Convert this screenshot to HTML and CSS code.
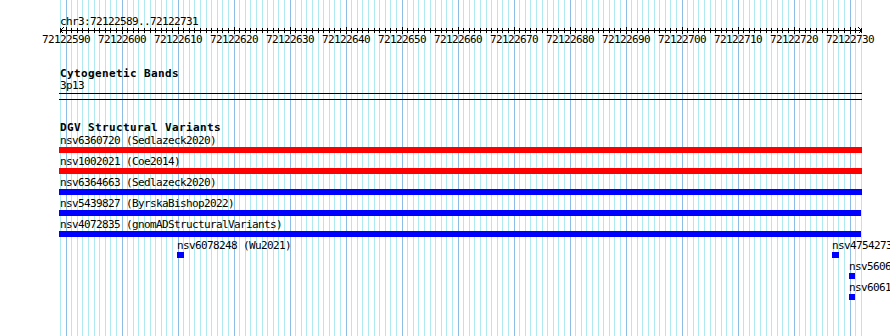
FILE: index.html
```html
<!DOCTYPE html>
<html>
<head>
<meta charset="utf-8">
<link rel="stylesheet" href="styles.css">
</head>
<body>
<div class="page">
  <div class="panel">
    <section class="ruler-track">
      <div class="chr-label">chr3:72122589..72122731</div>
      <div class="ruler">
        <svg class="arrow arrow-left" width="4" height="7" viewBox="0 0 4 7"><polyline points="3.5,0.5 0.5,3.5 3.5,6.5" fill="none" stroke="#000" stroke-width="1"/></svg>
        <svg class="arrow arrow-right" width="4" height="7" viewBox="0 0 4 7"><polyline points="0.5,0.5 3.5,3.5 0.5,6.5" fill="none" stroke="#000" stroke-width="1"/></svg>
      </div>
      <div class="ruler-labels">
        <span>72122590</span><span>72122600</span><span>72122610</span><span>72122620</span><span>72122630</span>
        <span>72122640</span><span>72122650</span><span>72122660</span><span>72122670</span><span>72122680</span>
        <span>72122690</span><span>72122700</span><span>72122710</span><span>72122720</span><span>72122730</span>
      </div>
    </section>

    <section class="track band-track">
      <div class="track-title band-title">Cytogenetic Bands</div>
      <div class="feat-label">3p13</div>
      <div class="band"></div>
    </section>

    <section class="track dgv-track">
      <div class="track-title">DGV Structural Variants</div>
      <div class="row">
        <div class="feature"><div class="feat-label">nsv6360720 (Sedlazeck2020)</div><div class="bar red" style="width:803px"></div></div>
      </div>
      <div class="row">
        <div class="feature"><div class="feat-label">nsv1002021 (Coe2014)</div><div class="bar red" style="width:803px"></div></div>
      </div>
      <div class="row">
        <div class="feature"><div class="feat-label">nsv6364663 (Sedlazeck2020)</div><div class="bar blue" style="width:803px"></div></div>
      </div>
      <div class="row">
        <div class="feature"><div class="feat-label">nsv5439827 (ByrskaBishop2022)</div><div class="bar blue" style="width:802px"></div></div>
      </div>
      <div class="row">
        <div class="feature"><div class="feat-label">nsv4072835 (gnomADStructuralVariants)</div><div class="bar blue" style="width:802px"></div></div>
      </div>
      <div class="row">
        <div class="feature small" style="margin-left:117px"><div class="feat-label">nsv6078248 (Wu2021)</div><div class="box blue" style="width:7px"></div></div>
        <div class="feature small" style="margin-left:541px"><div class="feat-label">nsv4754273</div><div class="box blue" style="width:7px"></div></div>
      </div>
      <div class="row">
        <div class="feature small" style="margin-left:789px"><div class="feat-label">nsv5606</div><div class="box blue" style="width:6px"></div></div>
      </div>
      <div class="row">
        <div class="feature small" style="margin-left:789px"><div class="feat-label">nsv6061</div><div class="box blue" style="width:6px"></div></div>
      </div>
    </section>
  </div>
</div>
</body>
</html>
```

FILE: styles.css
```css
* { box-sizing: border-box; }
html, body { margin: 0; padding: 0; background: #fff; }
body {
  width: 890px;
  height: 336px;
  overflow: hidden;
  font-family: "DejaVu Sans Mono", "Liberation Mono", monospace;
  font-size: 11px;
  letter-spacing: -0.62px;
  color: #000;
}
.page {
  width: 890px;
  height: 336px;
  padding-left: 60px;
  overflow: hidden;
}
.panel {
  width: 802px;
  height: 336px;
  background-image: linear-gradient(to right,
    #aeeaf0 0 1px, transparent 1px 6px,
    #8dbde4 6px 7px, transparent 7px 11px,
    #aeeaf0 11px 12px, transparent 12px 17px,
    #aeeaf0 17px 18px, transparent 18px 22px,
    #aeeaf0 22px 23px, transparent 23px 28px,
    #aeeaf0 28px 29px, transparent 29px 34px,
    #aeeaf0 34px 35px, transparent 35px 39px,
    #aeeaf0 39px 40px, transparent 40px 45px,
    #aeeaf0 45px 46px, transparent 46px 50px,
    #aeeaf0 50px 51px, transparent 51px 56px);
  background-size: 56px 100%;
  background-repeat: repeat-x;
  white-space: nowrap;
}

/* ruler */
.ruler-track { padding-top: 16px; }
.chr-label { height: 11px; line-height: 11px; }
.ruler {
  position: relative;
  height: 7px;
  background-image:
    linear-gradient(#000, #000),
    linear-gradient(to right,
      #000 0 1px, transparent 1px 6px,
      #000 6px 7px, transparent 7px 11px,
      #000 11px 12px, transparent 12px 17px,
      #000 17px 18px, transparent 18px 22px,
      #000 22px 23px, transparent 23px 28px,
      #000 28px 29px, transparent 29px 34px,
      #000 34px 35px, transparent 35px 39px,
      #000 39px 40px, transparent 40px 45px,
      #000 45px 46px, transparent 46px 50px,
      #000 50px 51px, transparent 51px 56px),
    linear-gradient(to right, transparent 0 6px, #000 6px 7px, transparent 7px 56px);
  background-size: 100% 1px, 56px 5px, 56px 7px;
  background-position: 0 3px, 0 1px, 0 0;
  background-repeat: no-repeat, repeat-x, repeat-x;
}
.arrow { position: absolute; top: 0; display: block; shape-rendering: crispEdges; }
.arrow-left { left: 0; }
.arrow-right { left: 798px; }
.ruler-labels {
  display: flex;
  margin-left: -22px;
  height: 12px;
  line-height: 12px;
}
.ruler-labels span {
  flex: none;
  width: 56px;
  text-align: center;
}

/* tracks */
.track-title {
  font-weight: bold;
  letter-spacing: 0.38px;
  height: 13px;
  line-height: 12px;
}
.band-title { height: 12px; }
.feat-label { height: 12px; line-height: 12px; }
.band-track { margin-top: 22px; }
.band {
  margin-top: 1px;
  margin-left: -1px;
  width: 803px;
  height: 7px;
  border-top: 1px solid #000;
  border-bottom: 1px solid #000;
}
.dgv-track { margin-top: 22px; }
.row {
  display: flex;
  height: 21px;
}
.feature { flex: none; display: flex; flex-direction: column; }
.bar { height: 6px; margin-left: -1px; }
.box { height: 6px; }
.red { background: #ff0000; }
.blue { background: #0000ff; }
```
